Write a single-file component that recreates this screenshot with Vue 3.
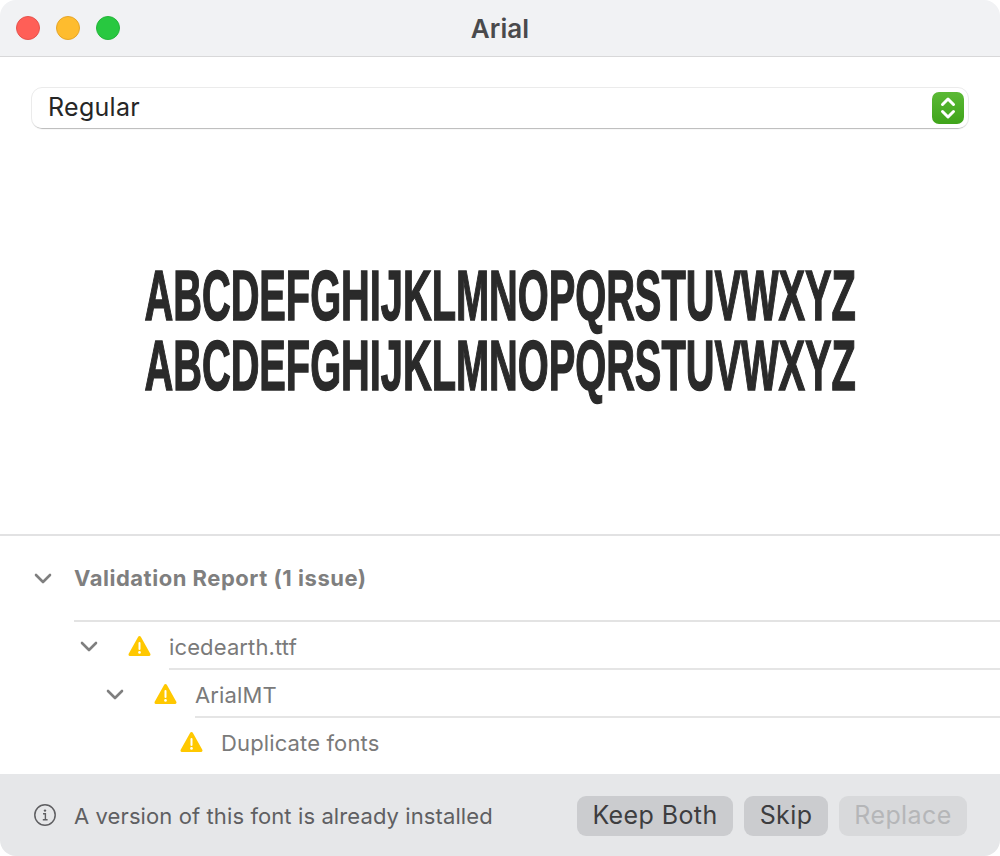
<script setup>
const rows = [
  { label: 'icedearth.ttf', chevron: true, indent: 0 },
  { label: 'ArialMT', chevron: true, indent: 1 },
  { label: 'Duplicate fonts', chevron: false, indent: 2 },
]
</script>

<template>
  <div class="window">
    <header class="titlebar">
      <div class="lights">
        <span class="light red"></span>
        <span class="light yellow"></span>
        <span class="light green"></span>
      </div>
      <div class="title">Arial</div>
    </header>

    <main class="main">
      <div class="select">
        <span class="select-label">Regular</span>
        <span class="stepper">
          <svg width="16" height="26" viewBox="0 0 16 26" fill="none" stroke="#fff" stroke-width="3" stroke-linecap="round" stroke-linejoin="round">
            <path d="M2.5 9.5 L8 4 L13.5 9.5" />
            <path d="M2.5 16.5 L8 22 L13.5 16.5" />
          </svg>
        </span>
      </div>
      <div class="preview">
        <div class="sample">ABCDEFGHIJKLMNOPQRSTUVWXYZ<br />ABCDEFGHIJKLMNOPQRSTUVWXYZ</div>
      </div>
    </main>

    <section class="report">
      <div class="report-head">
        <svg class="chev head-chev" width="18" height="11" viewBox="0 0 18 11" fill="none" stroke="#7f7f7f" stroke-width="2.6" stroke-linecap="round" stroke-linejoin="round">
          <path d="M2 2 L9 9 L16 2" />
        </svg>
        <span class="report-title">Validation Report (1 issue)</span>
      </div>
      <div class="tree">
        <div v-for="row in rows" :key="row.label" class="row" :style="{ marginLeft: row.indent * 26 + 'px' }">
          <span class="chev-slot">
            <svg v-if="row.chevron" width="18" height="11" viewBox="0 0 18 11" fill="none" stroke="#7f7f7f" stroke-width="2.6" stroke-linecap="round" stroke-linejoin="round">
              <path d="M2 2 L9 9 L16 2" />
            </svg>
          </span>
          <svg class="warn" width="24" height="22" viewBox="0 0 24 22">
            <path d="M11.5 2.5 L21 19.5 H2 Z" fill="#ffc800" stroke="#ffc800" stroke-width="3" stroke-linejoin="round" />
            <rect x="10.5" y="7" width="2" height="8" rx="1" fill="#fff" />
            <circle cx="11.5" cy="17.4" r="1.3" fill="#fff" />
          </svg>
          <span class="row-label">{{ row.label }}</span>
        </div>
      </div>
    </section>

    <footer class="footer">
      <svg class="info" width="24" height="24" viewBox="0 0 24 24" fill="none">
        <circle cx="12" cy="12" r="10.2" stroke="#5f5f62" stroke-width="1.5" />
        <circle cx="12" cy="7.6" r="1.2" fill="#5f5f62" />
        <path d="M10 10.8 H12.4 V16.6 M9.8 16.8 H14.6" stroke="#5f5f62" stroke-width="1.4" />
      </svg>
      <span class="notice">A version of this font is already installed</span>
      <div class="buttons">
        <button class="btn keep">Keep Both</button>
        <button class="btn skip">Skip</button>
        <button class="btn replace" disabled>Replace</button>
      </div>
    </footer>
  </div>
</template>

<style>
html, body { margin: 0; background: #fff; }
</style>

<style scoped>
.window {
  width: 1000px;
  height: 856px;
  display: flex;
  flex-direction: column;
  border-radius: 16px;
  overflow: hidden;
  background: #fff;
  font-family: Inter, "Liberation Sans", sans-serif;
}
.titlebar {
  height: 56px;
  flex: none;
  display: flex;
  align-items: center;
  justify-content: center;
  position: relative;
  background: #f1f2f4;
  border-bottom: 1px solid #d8d8d9;
}
.lights {
  position: absolute;
  left: 16px;
  top: 16px;
  display: flex;
  gap: 16px;
}
.light {
  width: 24px;
  height: 24px;
  border-radius: 50%;
  box-sizing: border-box;
  border: 1px solid;
}
.red { background: #ff5f57; border-color: #e5534d; }
.yellow { background: #febc2e; border-color: #e5a528; }
.green { background: #28c840; border-color: #24b53a; }
.title {
  font-size: 26px;
  font-weight: 600;
  color: #4a4a4c;
  letter-spacing: 0.1px;
}
.main {
  height: 479px;
  flex: none;
  display: flex;
  flex-direction: column;
  box-sizing: border-box;
  padding: 31px 32px 0;
  border-bottom: 2px solid #e2e2e3;
}
.select {
  height: 40px;
  flex: none;
  display: flex;
  align-items: center;
  justify-content: space-between;
  padding: 0 4px 0 16px;
  border-radius: 10px;
  background: #fff;
  box-shadow: 0 -1px 0 0 #ebebeb, 1px 0 0 0 #ebebeb, -1px 0 0 0 #ebebeb, 0 1px 1px 0 rgba(0, 0, 0, 0.28);
}
.select-label {
  font-size: 25px;
  letter-spacing: 0.3px;
  color: #262626;
  position: relative;
  top: -1px;
}
.stepper {
  width: 32px;
  height: 32px;
  border-radius: 7px;
  display: flex;
  align-items: center;
  justify-content: center;
  background: linear-gradient(#5bb935, #3fa41a);
}
.preview {
  flex: 1;
  display: flex;
  flex-direction: column;
  align-items: center;
  justify-content: center;
}
.sample {
  font-family: "Liberation Sans", sans-serif;
  font-weight: 700;
  font-size: 70px;
  line-height: 70px;
  color: #2a2a2a;
  white-space: nowrap;
  transform: scaleX(0.568);
  -webkit-text-stroke: 1.5px #2a2a2a;
}
.report {
  flex: 1;
  display: flex;
  flex-direction: column;
}
.report-head {
  height: 84px;
  flex: none;
  display: flex;
  align-items: center;
  padding-left: 34px;
  box-sizing: border-box;
}
.head-chev { margin-right: 22px; }
.report-title {
  font-size: 22px;
  font-weight: 700;
  letter-spacing: 0.52px;
  color: #7f7f7f;
}
.tree {
  margin-left: 74px;
  border-top: 2px solid #e3e3e3;
}
.row {
  height: 48px;
  display: flex;
  align-items: center;
}
.chev-slot {
  width: 54px;
  display: flex;
  padding-left: 6px;
  box-sizing: border-box;
  flex: none;
}
.warn { margin-right: 17px; flex: none; }
.row-label {
  flex: 1;
  height: 48px;
  box-sizing: border-box;
  padding-top: 4px;
  display: flex;
  align-items: center;
  font-size: 22px;
  letter-spacing: 0.13px;
  color: #7a7a7a;
  border-bottom: 2px solid #e5e5e5;
}
.row:last-child .row-label { border-bottom: 0; padding-top: 2px; }
.footer {
  height: 82px;
  flex: none;
  display: flex;
  align-items: center;
  padding: 0 33px;
  box-sizing: border-box;
  background: #e6e7e9;
}
.info { margin-right: 17px; flex: none; }
.notice {
  font-size: 22px;
  letter-spacing: 0.1px;
  color: #5f5f62;
  padding-top: 2px;
}
.buttons {
  margin-left: auto;
  display: flex;
  gap: 11px;
  padding-top: 1px;
}
.btn {
  height: 40px;
  border: 0;
  padding: 0 0 2px;
  border-radius: 9px;
  background: #cbcccf;
  font-family: Inter, "Liberation Sans", sans-serif;
  font-size: 25px;
  letter-spacing: 0.4px;
  color: #3d3d3f;
}
.keep { width: 156px; }
.skip { width: 84px; }
.replace { width: 128px; background: #d8d9db; color: #b5b6b8; }
</style>
